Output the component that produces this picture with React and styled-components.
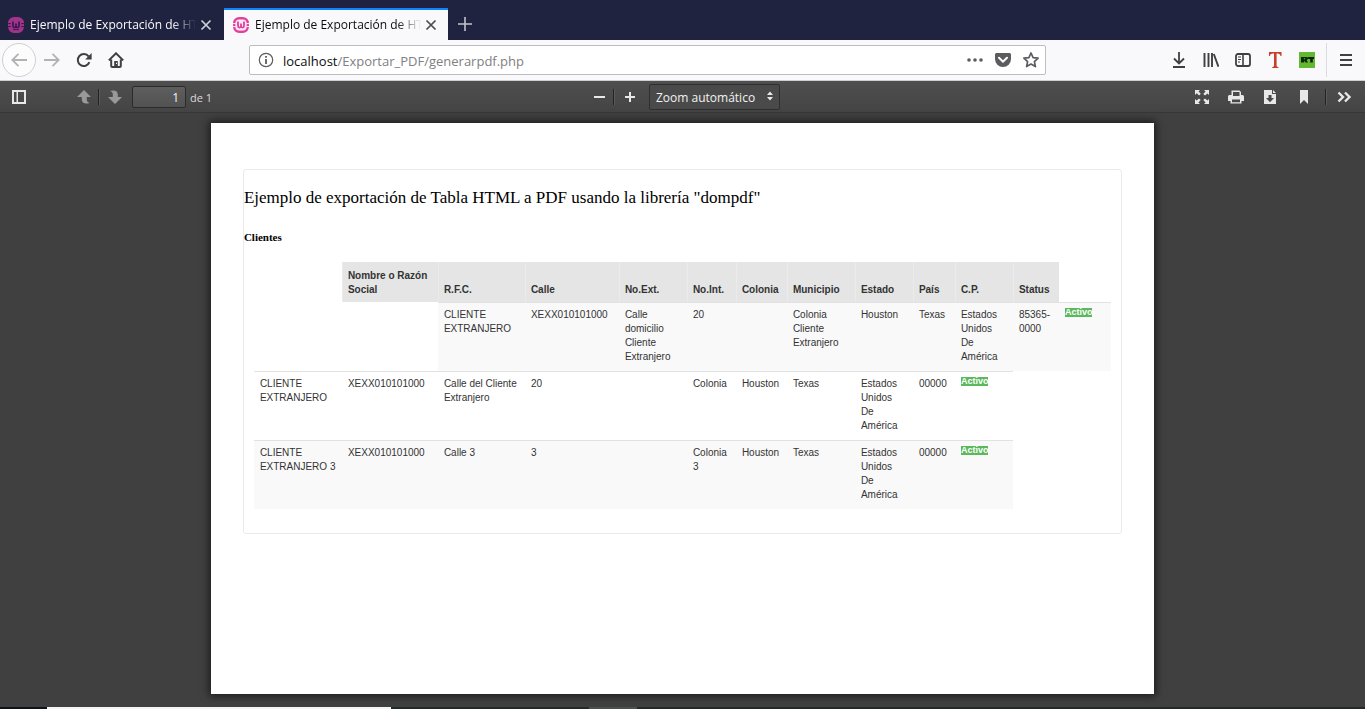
import React from "react";
import styled, { createGlobalStyle, css } from "styled-components";

const GlobalStyle = createGlobalStyle`
  * {
    box-sizing: border-box;
  }
  body {
    margin: 0;
    background: #404040;
    font-family: "Open Sans", "Noto Sans", sans-serif;
  }
  button, input, select {
    font-family: inherit;
  }
`;

const Window = styled.div`
  display: flex;
  flex-direction: column;
  min-height: 100vh;
`;

/* ---------- tabs ---------- */

const TabStrip = styled.div`
  display: flex;
  height: 40px;
  padding-top: 8px;
  background: #202340;
`;

const Tab = styled.div`
  display: flex;
  align-items: center;
  width: 224px;
  height: 32px;
  padding: ${(p) => (p.$active ? "0 7px 0 9px" : "0 8px")};
  border-top: 2px solid ${(p) => (p.$active ? "#0a84ff" : "transparent")};
  background: ${(p) => (p.$active ? "#f9f9fb" : "transparent")};
  color: ${(p) => (p.$active ? "#0c0c0d" : "#f9f9fa")};
`;

const TabTitle = styled.span`
  flex: 1;
  min-width: 0;
  margin-left: 6px;
  overflow: hidden;
  white-space: nowrap;
  font-size: 12px;
  line-height: 20px;
  mask-image: linear-gradient(to left, transparent, #000 24px);
`;

const IconButton = styled.button`
  display: flex;
  align-items: center;
  justify-content: center;
  flex: none;
  width: ${(p) => p.$width || 32}px;
  height: 32px;
  padding: 0;
  border: 0;
  background: none;
  color: ${(p) => p.$color || "#3f3f44"};
`;

const TabClose = styled(IconButton)`
  width: 20px;
  height: 20px;
  color: ${(p) => p.$color || "#4a4a4f"};
`;

/* ---------- navigation bar ---------- */

const NavBar = styled.div`
  display: flex;
  align-items: center;
  height: 41px;
  padding: 0 3px 1px 2px;
  border-bottom: 1px solid #cfcfd1;
  background: #f9f9fb;
`;

const BackButton = styled(IconButton)`
  width: 34px;
  height: 34px;
  border: 1px solid #d0d0d2;
  border-radius: 50%;
  background: #fcfcfd;
  color: #b2b2b4;
`;

const UrlBar = styled.div`
  display: flex;
  align-items: center;
  flex: 1;
  height: 30px;
  margin: 0 117px;
  padding: 0 0 0 8px;
  border: 1px solid #bdbdbf;
  border-radius: 2px;
  background: #fff;
  color: #5c5c60;
`;

const Address = styled.a`
  flex: 1;
  margin-left: 9px;
  padding-top: 2px;
  color: #808083;
  font-size: 13px;
  line-height: 20px;
  text-decoration: none;

  b {
    color: #0c0c0d;
    font-weight: 400;
  }
`;

const Divider = styled.span`
  width: 1px;
  height: 34px;
  margin: 0 3px;
  background: #dcdcde;
`;

/* ---------- pdf toolbar ---------- */

const PdfBar = styled.div`
  display: grid;
  grid-template-columns: 1fr auto 1fr;
  align-items: center;
  height: 32px;
  background: linear-gradient(#4f4f4f, #444);
  border-bottom: 1px solid #373737;
`;

const Group = styled.div`
  display: flex;
  align-items: center;
  justify-content: ${(p) => (p.$end ? "flex-end" : "flex-start")};
  padding: ${(p) => p.$pad || "0"};
`;

const PdfButton = styled(IconButton)`
  width: ${(p) => p.$width || 34}px;
  height: 26px;
  color: ${(p) => (p.$off ? "#999" : "#e8e8e8")};
`;

const PdfDivider = styled.span`
  width: 2px;
  height: 16px;
  border-left: 1px solid #222;
  border-right: 1px solid #5a5a5a;
`;

const PageInput = styled.input`
  width: 54px;
  height: 22px;
  margin: 0 4px 0 3px;
  padding: 2px 6px 0;
  border: 1px solid #2b2b2b;
  border-radius: 2px;
  background: linear-gradient(#5e5e5e, #525252);
  color: #f2f2f2;
  font-size: 12px;
  text-align: right;
`;

const PageCount = styled.label`
  padding-top: 2px;
  color: #dadada;
  font-size: 11px;
  line-height: 20px;
`;

const ZoomBox = styled.div`
  position: relative;
  margin-left: 4px;
  color: #e8e8e8;

  svg {
    position: absolute;
    top: 4px;
    right: 2px;
    pointer-events: none;
  }
`;

const ZoomSelect = styled.select`
  display: block;
  appearance: none;
  width: 131px;
  height: 26px;
  padding: 2px 6px 0;
  border: 1px solid #2f2f2f;
  border-radius: 2px;
  background: #4a4a4a;
  color: #f2f2f2;
  font-size: 12px;
`;

/* ---------- document ---------- */

const Viewer = styled.main`
  display: flex;
  flex: 1;
  justify-content: center;
  padding: 10px 0 13px;
  background: #404040;
`;

const Sheet = styled.article`
  width: 69.1%;
  padding: 46px 32px;
  background: #fff;
  box-shadow: 0 0 8px 2px rgba(0, 0, 0, 0.6);
`;

const Card = styled.section`
  padding-bottom: 24px;
  border: 1px solid #eaeaea;
  border-radius: 3px;
  color: #000;
  font-family: "Liberation Serif", serif;
`;

const Heading = styled.h1`
  margin: 17px 0 0;
  font-size: 17px;
  font-weight: 400;
  line-height: 22px;
`;

const Subheading = styled.h2`
  margin: 21px 0 17px;
  font-size: 11px;
  font-weight: 700;
  line-height: 15px;
`;

const TableWrap = styled.div`
  padding: 0 10px;
`;

const Table = styled.table`
  width: 100%;
  table-layout: fixed;
  border-spacing: 0;
  color: #333;
  font-family: "Liberation Sans", sans-serif;
  font-size: 10px;
  line-height: 14px;
  text-align: left;
`;

const Col = styled.col`
  width: ${(p) => (p.$width ? `${p.$width}px` : "auto")};
`;

const cell = css`
  padding: 5px 6px;
`;

const HeadCell = styled.th`
  ${cell}
  background: #e5e5e5;
  box-shadow: inset 1px 0 #ebebeb;
  vertical-align: bottom;
`;

const Row = styled.tr`
  height: ${(p) => p.$height || 69}px;
`;

const Cell = styled.td`
  ${cell}
  border-top: 1px solid #e2e2e2;
  background: ${(p) => (p.$striped ? "#f9f9f9" : "#fff")};
  vertical-align: top;
`;

const Gap = styled.td`
  padding: 0;
`;

const Badge = styled.span`
  display: block;
  width: max-content;
  height: 9px;
  background: #5cb85c;
  color: #fff;
  font-size: 9px;
  font-weight: 700;
  line-height: 9px;
`;

/* ---------- bottom edge ---------- */

const Edge = styled.footer`
  display: flex;
  height: 2px;
  background: #1f2a2a;
`;

const EdgePart = styled.span`
  width: ${(p) => p.$width}px;
  background: ${(p) => p.$color};
`;

/* ---------- icons ---------- */

const Icon = ({ size = 16, children, ...rest }) => (
  <svg
    width={size}
    height={size}
    viewBox="0 0 16 16"
    fill="none"
    stroke="currentColor"
    strokeWidth="2"
    aria-hidden="true"
    {...rest}
  >
    {children}
  </svg>
);

const Solid = (props) => <Icon fill="currentColor" stroke="none" {...props} />;

const WampIcon = ({ color, inner, cut }) => (
  <Icon stroke={color}>
    <rect x="1.2" y="1.2" width="13.6" height="13.6" rx="5" fill={inner} strokeWidth="2.4" />
    <path d="M0 6.6h3M0 9.6h3M13 6.6h3M13 9.6h3" stroke={cut} strokeWidth="1" />
    <path
      d="M5 4.5v4.300c0 2.300 3 2.300 3 .2V6.500V9c0 2.100 3 2.100 3-.2V4.500"
      strokeWidth="1.800"
      stroke={inner === color ? cut : color}
    />
    <path d="M5 12.600h6" stroke={cut} strokeWidth="1" />
  </Icon>
);

const CloseIcon = () => (
  <Icon strokeWidth="1.7">
    <path d="M3.500 3.500l9 9M12.500 3.500l-9 9" />
  </Icon>
);

const widths = [88, 96, 87, 94, 68, 49, 51, 68, 58, 42, 58, 46];

const headers = [
  "Nombre o Razón Social",
  "R.F.C.",
  "Calle",
  "No.Ext.",
  "No.Int.",
  "Colonia",
  "Municipio",
  "Estado",
  "País",
  "C.P.",
  "Status",
];

const country = "Estados Unidos De América";

const rows = [
  {
    before: 2,
    striped: true,
    cells: [
      "CLIENTE EXTRANJERO",
      "XEXX010101000",
      "Calle domicilio Cliente Extranjero",
      "20",
      "",
      "Colonia Cliente Extranjero",
      "Houston",
      "Texas",
      country,
      "85365-0000",
    ],
  },
  {
    after: 2,
    cells: [
      "CLIENTE EXTRANJERO",
      "XEXX010101000",
      "Calle del Cliente Extranjero",
      "20",
      "",
      "Colonia",
      "Houston",
      "Texas",
      country,
      "00000",
    ],
  },
  {
    after: 2,
    striped: true,
    cells: [
      "CLIENTE EXTRANJERO 3",
      "XEXX010101000",
      "Calle 3",
      "3",
      "",
      "Colonia 3",
      "Houston",
      "Texas",
      country,
      "00000",
    ],
  },
];

const Tabs = () => (
  <TabStrip>
    <Tab>
      <WampIcon color="#a2348c" inner="#a2348c" cut="#401a4e" />
      <TabTitle>Ejemplo de Exportación de HTML a PDF</TabTitle>
      <TabClose aria-label="Cerrar pestaña" $color="#d0d0d8">
        <CloseIcon />
      </TabClose>
    </Tab>
    <Tab $active>
      <WampIcon color="#e0409f" inner="#fdeaf5" cut="#fdeaf5" />
      <TabTitle>Ejemplo de Exportación de HTML a PDF</TabTitle>
      <TabClose aria-label="Cerrar pestaña">
        <CloseIcon />
      </TabClose>
    </Tab>
    <IconButton $width={34} aria-label="Nueva pestaña" $color="#c4c4cc">
      <Icon strokeWidth="1.600">
        <path d="M8 1v14M1 8h14" />
      </Icon>
    </IconButton>
  </TabStrip>
);

const Navigation = () => (
  <NavBar>
    <BackButton aria-label="Atrás">
      <Icon>
        <path d="M16 8H1.500M7.500 1.800L1.300 8l6.200 6.200" strokeWidth="1.800" />
      </Icon>
    </BackButton>
    <IconButton aria-label="Adelante" $color="#b2b2b4">
      <Icon>
        <path d="M0 8h14.500M8.500 1.800L14.700 8l-6.200 6.200" strokeWidth="1.800" />
      </Icon>
    </IconButton>
    <IconButton aria-label="Recargar">
      <Icon>
        <path d="M13.400 10.200a6 6 0 1 1-.8-5.800" />
        <path d="M15.600 1v6.400H9.200z" fill="currentColor" stroke="none" />
      </Icon>
    </IconButton>
    <IconButton aria-label="Inicio">
      <Icon>
        <path d="M.8 8.400L8 1.300l7.200 7.100M3.200 7.500V14q0 1 1 1h7.600q1 0 1-1V7.500" />
        <path d="M6.200 9h3.600v5H6.200zM8 10.800v1.200h1v-1.200z" fill="currentColor" fillRule="evenodd" stroke="none" />
      </Icon>
    </IconButton>
    <UrlBar>
      <Icon strokeWidth="1.200">
        <circle cx="8" cy="8" r="6.700" />
        <path d="M8 7v5M8 4v1.800" strokeWidth="1.800" />
      </Icon>
      <Address href="#">
        <b>localhost</b>/Exportar_PDF/generarpdf.php
      </Address>
      <IconButton $width={28} aria-label="Acciones de página" $color="#5c5c60">
        <Solid>
          <circle cx="2" cy="8" r="1.800" />
          <circle cx="8" cy="8" r="1.800" />
          <circle cx="14" cy="8" r="1.800" />
        </Solid>
      </IconButton>
      <IconButton $width={28} aria-label="Guardar en Pocket" $color="#5c5c60">
        <Icon>
          <path
            d="M1.600 1h12.800C15.400 1 16 1.700 16 2.600V7a8 8 0 0 1-16 0V2.600C0 1.700.6 1 1.600 1z"
            fill="currentColor"
            stroke="none"
          />
          <path d="M4 5.800l4 3.900 4-3.900" stroke="#fff" strokeLinecap="round" />
        </Icon>
      </IconButton>
      <IconButton $width={28} aria-label="Añadir a marcadores" $color="#5c5c60">
        <Icon strokeWidth="1.700" strokeLinejoin="round">
          <path d="M8 1l2.100 4.600 5 .6-3.700 3.400 1 5L8 12.100 3.600 14.600l1-5L.9 6.200l5-.6z" />
        </Icon>
      </IconButton>
    </UrlBar>
    <IconButton aria-label="Descargas">
      <Icon>
        <path d="M8 0v11M3 6.500l5 5 5-5M2 15h12" strokeWidth="1.800" />
      </Icon>
    </IconButton>
    <IconButton aria-label="Catálogo">
      <Icon>
        <path d="M1.500 1v14M5.500 1v14M9 1v14M10.800 2l4.600 12.700" strokeWidth="1.900" />
      </Icon>
    </IconButton>
    <IconButton aria-label="Barras laterales">
      <Icon>
        <rect x="1" y="2" width="14" height="12" rx="2" strokeWidth="1.800" />
        <path d="M8 2v12" strokeWidth="1.600" />
        <path d="M3 5h3M3 7.500h3M3 10h2" strokeWidth="1" />
      </Icon>
    </IconButton>
    <IconButton aria-label="Extensión T" $color="#c8402c">
      <Solid>
        <path d="M2 0h12.500v4h-1c-.3-1.800-1-2.600-3-2.600h-.9v11.800c0 1.200.4 1.700 1.800 1.800v.9H5.200v-.9c1.400-.1 1.800-.6 1.800-1.800V1.400H6c-2 0-2.700.8-3 2.600H2z" />
      </Solid>
    </IconButton>
    <IconButton aria-label="RT">
      <Solid>
        <path d="M0 0h16v16H0z" fill="#63b832" />
        <path
          d="M2 5h5.500c1.500 0 1.500 3 .2 3.200L9 10.500H6.500L5.200 8.600v1.900H2zM8.600 5H15v2h-1.200v3.500h-2.600V7H8.600zM4.800 6.300v1h1.300v-1z"
          fill="#0d2408"
          fillRule="evenodd"
        />
      </Solid>
    </IconButton>
    <Divider />
    <IconButton aria-label="Menú">
      <Icon>
        <path d="M2 3h12M2 8h12M2 13h12" strokeWidth="1.800" />
      </Icon>
    </IconButton>
  </NavBar>
);

const PdfToolbar = () => (
  <PdfBar>
    <Group $pad="0 0 0 2px">
      <PdfButton aria-label="Barra lateral">
        <Solid>
          <path d="M1 1h14v14H1zM3 3v10h2.500V3zM7 3v10h6V3z" fillRule="evenodd" />
        </Solid>
      </PdfButton>
      <Group $pad="0 0 0 34px">
        <PdfButton $width={28} $off aria-label="Página anterior">
          <Solid>
            <path d="M8 1l7 7h-4.200v2.500c0 2 1 3 3 3.500-4.500 1.300-8 .4-8-3.500V8H1z" />
          </Solid>
        </PdfButton>
        <PdfDivider />
        <PdfButton $width={29} $off aria-label="Página siguiente">
          <Solid>
            <path d="M8 15l7-7h-4.200V5.500c0-3.900-3.500-4.800-8-3.500 2 .5 3 1.500 3 3.500V8H1z" />
          </Solid>
        </PdfButton>
        <PageInput id="page" defaultValue="1" />
        <PageCount htmlFor="page">de 1</PageCount>
      </Group>
    </Group>
    <Group>
      <PdfButton $width={28} aria-label="Reducir">
        <Icon>
          <path d="M3 8h11" />
        </Icon>
      </PdfButton>
      <PdfDivider />
      <PdfButton $width={30} aria-label="Aumentar">
        <Icon>
          <path d="M3 8h10M8 3v10" />
        </Icon>
      </PdfButton>
      <ZoomBox>
        <ZoomSelect aria-label="Zoom">
          <option>Zoom automático</option>
        </ZoomSelect>
        <Solid>
          <path d="M8 3.500l3 3.500H5zM8 12.500L5 9h6z" />
        </Solid>
      </ZoomBox>
    </Group>
    <Group $end $pad="0 4px 0 0">
      <PdfButton aria-label="Presentación">
        <Solid>
          <path d="M1 1h5L4.500 2.500l2.300 2.300-1.700 1.700-2.400-2.200L1 6zM15 1v5l-1.600-1.600-2.400 2.200-1.700-1.700 2.300-2.400L10 1zM1 15v-5l1.600 1.600L5 9.400l1.700 1.700-2.300 2.300L6 15zM15 15h-5l1.600-1.600-2.300-2.300L11 9.400l2.400 2.200L15 10z" />
        </Solid>
      </PdfButton>
      <PdfButton aria-label="Imprimir">
        <Solid>
          <path d="M3.500 6V1.500h8L13 3v3h1.500A1.500 1.500 0 0 1 16 7.500V12h-2.500v2.500h-11V12H0V7.500A1.500 1.500 0 0 1 1.500 6zM5 3v4h6.500V3zM4 10.500v2.800h8v-2.800z" fillRule="evenodd" />
        </Solid>
      </PdfButton>
      <PdfButton aria-label="Descargar">
        <Solid>
          <path d="M2 1h8v4h4v10H2zM11 1l3 3h-3zM6.500 6v3H4l4 4.200L12 9H9.500V6z" fillRule="evenodd" />
        </Solid>
      </PdfButton>
      <PdfButton aria-label="Marcador">
        <Solid>
          <path d="M4 1h8v14l-4-4-4 4z" />
        </Solid>
      </PdfButton>
      <Group $pad="0 0 0 4px">
        <PdfDivider />
      </Group>
      <PdfButton aria-label="Herramientas">
        <Icon strokeWidth="2.400">
          <path d="M2.500 3.500L7 8l-4.500 4.500M9 3.500L13.500 8 9 12.500" />
        </Icon>
      </PdfButton>
    </Group>
  </PdfBar>
);

const ClientTable = () => (
  <Table>
    <colgroup>
      {widths.map((w, i) => (
        <Col key={i} $width={w} />
      ))}
      <Col />
    </colgroup>
    <thead>
      <Row $height={40}>
        <Gap />
        {headers.map((h) => (
          <HeadCell key={h} scope="col">
            {h}
          </HeadCell>
        ))}
        <Gap />
      </Row>
    </thead>
    <tbody>
      {rows.map((row, i) => (
        <Row key={i}>
          {row.before && <Gap colSpan={row.before} />}
          {row.cells.map((text, j) => (
            <Cell key={j} $striped={row.striped}>
              {text}
            </Cell>
          ))}
          <Cell $striped={row.striped}>
            <Badge>Activo</Badge>
          </Cell>
          {row.after && <Gap colSpan={row.after} />}
        </Row>
      ))}
    </tbody>
  </Table>
);

const App = () => {
  return (
    <Window>
      <GlobalStyle />
      <Tabs />
      <Navigation />
      <PdfToolbar />
      <Viewer>
        <Sheet>
          <Card>
            <Heading>
              Ejemplo de exportación de Tabla HTML a PDF usando la librería "dompdf"
            </Heading>
            <Subheading>Clientes</Subheading>
            <TableWrap>
              <ClientTable />
            </TableWrap>
          </Card>
        </Sheet>
      </Viewer>
      <Edge>
        <EdgePart $width={47} $color="#0b1518" />
        <EdgePart $width={344} $color="#f4f4f4" />
        <EdgePart $width={198} $color="#202c2c" />
        <EdgePart $width={48} $color="#4a5050" />
      </Edge>
    </Window>
  );
};

export default App;
